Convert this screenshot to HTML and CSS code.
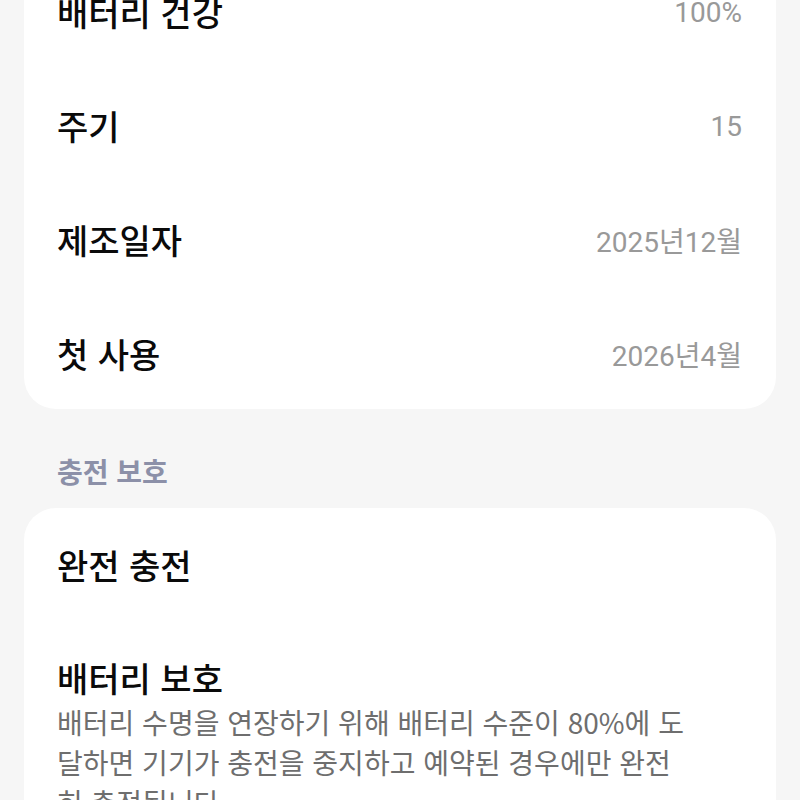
FILE: index.html
```html
<!DOCTYPE html>
<html lang="ko">
<head>
<meta charset="utf-8">
<link rel="stylesheet" href="styles.css">
</head>
<body>
<div class="page">
  <div class="card first">
    <div class="row"><span class="title">배터리 건강</span><span class="value">100%</span></div>
    <div class="row"><span class="title">주기</span><span class="value">15</span></div>
    <div class="row"><span class="title">제조일자</span><span class="value">2025년12월</span></div>
    <div class="row"><span class="title">첫 사용</span><span class="value">2026년4월</span></div>
  </div>
  <div class="section">충전 보호</div>
  <div class="card second">
    <div class="row"><span class="title">완전 충전</span></div>
    <div class="item">
      <div class="title">배터리 보호</div>
      <div class="desc">배터리 수명을 연장하기 위해 배터리 수준이 80%에 도달하면 기기가 충전을 중지하고 예약된 경우에만 완전히 충전됩니다.</div>
    </div>
  </div>
</div>
</body>
</html>
```

FILE: styles.css
```css
html, body {
  margin: 0;
  padding: 0;
  background: #f6f6f6;
}
body {
  font-family: "Noto Sans CJK KR", "Noto Sans", sans-serif;
  overflow: hidden;
  height: 800px;
}
.page {
  margin-top: -45px;
  padding: 0 24px;
}
.card {
  background: #ffffff;
  border-radius: 32px;
  padding: 0 33px;
}
.card.first {
  border-top-left-radius: 0;
  border-top-right-radius: 0;
  height: 454px;
}
.card.second {
  padding-bottom: 60px;
}
.row {
  height: 114px;
  display: flex;
  align-items: center;
  justify-content: space-between;
}
.title {
  font-size: 34px;
  font-weight: 500;
  color: #0a0a0a;
  line-height: 40px;
}
.value {
  font-family: Roboto, "Noto Sans CJK KR", sans-serif;
  font-size: 28px;
  font-weight: 400;
  color: #999999;
  padding-right: 1px;
}
.section {
  font-size: 28px;
  font-weight: 700;
  color: #8c90a8;
  padding: 44px 33px 0;
  height: 55px;
  line-height: 36px;
}
.item {
  padding-top: 36px;
}
.desc {
  font-size: 28px;
  color: #6e6e6e;
  line-height: 40px;
  margin-top: 4px;
  max-width: 632px;
}
```
